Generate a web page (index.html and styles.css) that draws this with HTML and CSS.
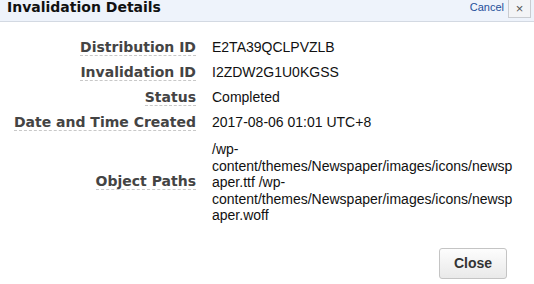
FILE: index.html
```html
<!DOCTYPE html>
<html lang="en">
<head>
  <meta charset="UTF-8" />
  <title>Invalidation Details</title>
  <link rel="stylesheet" href="styles.css">
</head>
<body>
  <div class="dialog">
    <div class="dialog-head">
      <h1 class="dialog-title">Invalidation Details</h1>
      <div class="head-actions">
        <a href="#" class="cancel">Cancel</a>
        <span class="close-x">&times;</span>
      </div>
    </div>

    <table class="details">
      <colgroup>
        <col class="col-term">
        <col class="col-value">
      </colgroup>
      <tr>
        <th><span class="term">Distribution ID</span></th>
        <td>E2TA39QCLPVZLB</td>
      </tr>
      <tr>
        <th><span class="term">Invalidation ID</span></th>
        <td>I2ZDW2G1U0KGSS</td>
      </tr>
      <tr>
        <th><span class="term">Status</span></th>
        <td>Completed</td>
      </tr>
      <tr>
        <th><span class="term">Date and Time Created</span></th>
        <td>2017-08-06 01:01 UTC+8</td>
      </tr>
      <tr>
        <th><span class="term">Object Paths</span></th>
        <td class="paths">/wp-content/themes/Newspaper/images/icons/newspaper.ttf /wp-content/themes/Newspaper/images/icons/newspaper.woff</td>
      </tr>
    </table>

    <div class="dialog-foot">
      <button type="button" class="btn">Close</button>
    </div>
  </div>
</body>
</html>
```

FILE: styles.css
```css
* {
  box-sizing: border-box;
  margin: 0;
  padding: 0;
}
body {
  background: #fff;
  color: #111;
  font-family: 'Liberation Sans', Arial, sans-serif;
  width: 534px;
  height: 284px;
  overflow: hidden;
}
.dialog-head {
  display: flex;
  justify-content: space-between;
  align-items: flex-start;
  height: 22px;
  padding: 0 3px 0 7px;
  background: #eef3fb;
  border-bottom: 1px solid #d3d9e2;
}
.dialog-title {
  font-family: 'DejaVu Sans', Verdana, sans-serif;
  font-size: 14px;
  line-height: 14px;
  font-weight: bold;
  color: #111;
}
.head-actions {
  display: flex;
  align-items: flex-start;
  gap: 4px;
}
.cancel {
  font-size: 11px;
  line-height: 13px;
  margin-top: 1px;
  color: #1f4f9a;
  text-decoration: none;
}
.close-x {
  display: block;
  width: 23px;
  height: 19px;
  margin-top: -1px;
  border: 1px solid #c9ccd1;
  background: #f3f4f6;
  color: #555;
  font-size: 13px;
  line-height: 17px;
  text-align: center;
}
.details {
  width: 515px;
  table-layout: fixed;
  border-collapse: collapse;
  margin-top: 13px;
}
.col-term {
  width: 196px;
}
.col-value {
  width: 319px;
}
.details th {
  padding: 4px 0;
  text-align: right;
  vertical-align: middle;
  white-space: nowrap;
  font-family: 'DejaVu Sans', Verdana, sans-serif;
  font-size: 14px;
  line-height: 17px;
  font-weight: bold;
  color: #444;
}
.term {
  border-bottom: 1px dashed #c8c8c8;
}
.details td {
  padding: 4px 0 4px 16px;
  vertical-align: middle;
  font-size: 14px;
  line-height: 17px;
  color: #111;
}
.details td.paths {
  padding-top: 6px;
  line-height: 16.5px;
  overflow-wrap: break-word;
}
.dialog-foot {
  display: flex;
  justify-content: flex-end;
  padding-right: 27px;
  margin-top: 20px;
}
.btn {
  height: 31px;
  padding: 0 14px;
  border: 1px solid #c4c4c4;
  border-radius: 3px;
  background: linear-gradient(#fdfdfd, #e9e9e9);
  font-family: 'Liberation Sans', Arial, sans-serif;
  font-size: 14px;
  font-weight: bold;
  color: #333;
  cursor: pointer;
}
```
